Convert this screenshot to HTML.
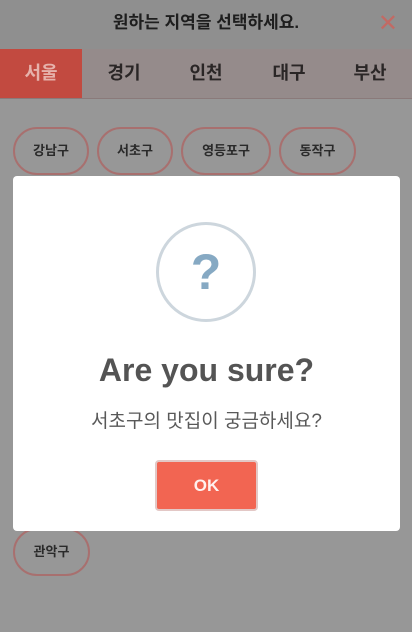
<!DOCTYPE html>
<html><head><meta charset="utf-8"><style>
*{margin:0;padding:0;box-sizing:border-box}
body{width:412px;height:632px;overflow:hidden;background:#979797;font-family:"Liberation Sans","Noto Sans CJK KR",sans-serif;position:relative}
.abs{position:absolute}
.hdr{left:0;top:0;width:412px;height:49px;background:#8f8f8f;color:#1e1e1e;font-size:17px;font-weight:bold;text-align:center;line-height:46px}
.x{right:14px;top:8px;color:#c26a64;font-size:24px;font-weight:normal;line-height:30px;font-family:"DejaVu Sans",sans-serif}
.tabs{left:0;top:49px;width:412px;height:50px;background:#958b8b;border-bottom:1px solid #8a7a7a}
.tab{top:0;height:49px;line-height:49px;font-size:18px;font-weight:bold;color:#2a2626;text-align:center;width:82px}
.sel{background:#c24a40;color:#e6b2ab}
.chip{height:48px;border:2px solid #a8706f;border-radius:24px;line-height:44px;text-align:center;font-size:13px;font-weight:bold;color:#2a2a2a}
.modal{left:13px;top:176px;width:387px;height:355px;background:#fff;border-radius:4px}
.circ{left:143px;top:46px;width:100px;height:100px;border:3px solid #cdd6dd;border-radius:50%;text-align:center;line-height:94px;font-size:50px;font-weight:bold;color:#86a9c3;font-family:"Liberation Sans",sans-serif}
.t{left:0;width:387px;top:176px;text-align:center;font-size:32px;font-weight:bold;color:#545454}
.s{left:0;width:387px;top:230px;text-align:center;font-size:19px;color:#595959}
.ok{left:142px;top:284px;width:103px;height:51px;background:#f26552;border:2px solid #e3c8c6;border-radius:4px;color:#fff0ee;font-size:17px;font-weight:bold;text-align:center;line-height:47px}
</style></head><body>
<div class="abs hdr">원하는 지역을 선택하세요.<span class="abs x">✕</span></div>
<div class="abs tabs">
<div class="abs tab sel" style="left:0">서울</div>
<div class="abs tab" style="left:83px">경기</div>
<div class="abs tab" style="left:165px">인천</div>
<div class="abs tab" style="left:248px">대구</div>
<div class="abs tab" style="left:329px">부산</div>
</div>
<div class="abs chip" style="left:13px;top:127px;width:76px">강남구</div>
<div class="abs chip" style="left:97px;top:127px;width:76px">서초구</div>
<div class="abs chip" style="left:181px;top:127px;width:90px">영등포구</div>
<div class="abs chip" style="left:279px;top:127px;width:77px">동작구</div>
<div class="abs chip" style="left:13px;top:528px;width:77px">관악구</div>
<div class="abs modal">
<div class="abs circ">?</div>
<div class="abs t">Are you sure?</div>
<div class="abs s">서초구의 맛집이 궁금하세요?</div>
<div class="abs ok">OK</div>
</div>
</body></html>
